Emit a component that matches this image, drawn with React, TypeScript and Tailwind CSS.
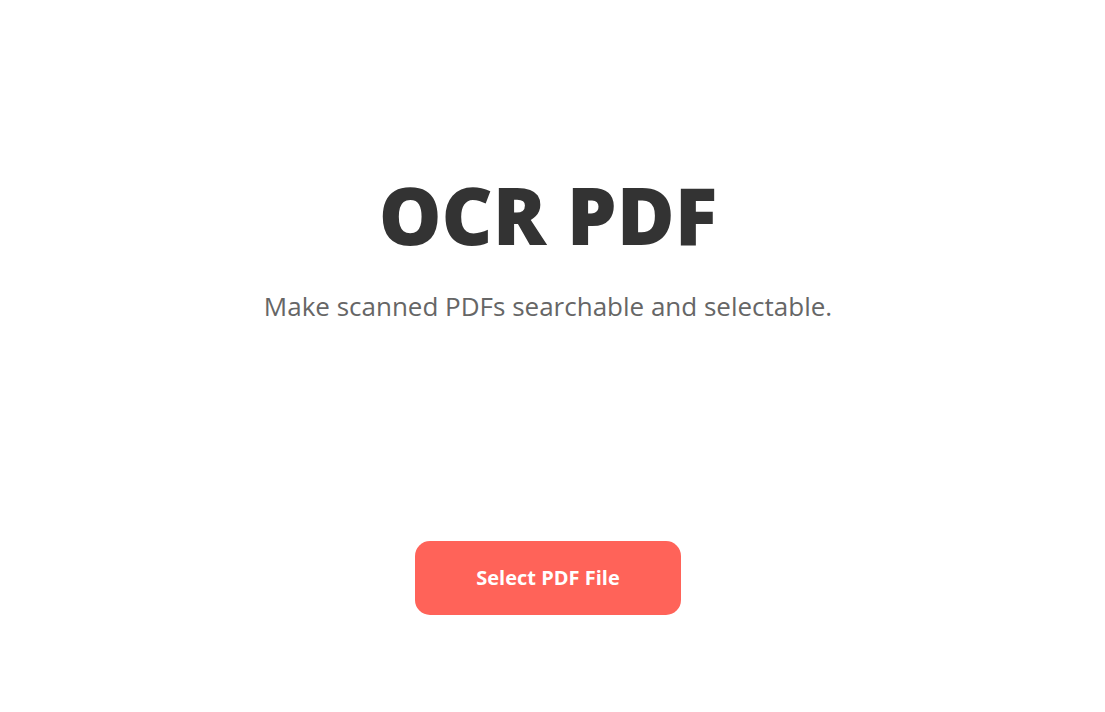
import React from "react";

export default function App() {
  return (
    <div className="min-h-[712px] w-full bg-white flex flex-col items-center pr-[9px]" style={{ fontFamily: '"Open Sans", "Noto Sans", sans-serif' }}>
      <h1 className="mt-[170px] text-[79px] leading-[90px] font-extrabold text-[#333333]">OCR PDF</h1>
      <p className="mt-[30px] text-[26px] leading-[32px] text-[#666666]">Make scanned PDFs searchable and selectable.</p>
      <button className="mt-[219px] w-[266px] h-[74px] rounded-[15px] bg-[#ff6359] text-white text-[20px] font-bold">Select PDF File</button>
    </div>
  );
}
